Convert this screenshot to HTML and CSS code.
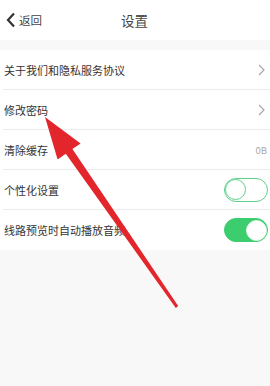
FILE: index.html
```html
<!DOCTYPE html>
<html lang="zh-CN">
<head>
<meta charset="utf-8">
<title>设置</title>
<link rel="stylesheet" href="styles.css">
</head>
<body>
  <div class="header">
    <div class="back">
      <svg width="10" height="16" viewBox="0 0 10 16"><path d="M8 1.5 L2 8 L8 14.5" fill="none" stroke="#333" stroke-width="2.2"/></svg>
      <span>返回</span>
    </div>
    <div class="title">设置</div>
    <div></div>
  </div>
  <div class="gap"></div>
  <div class="list">
    <div class="row">
      <span>关于我们和隐私服务协议</span>
      <svg class="chev" width="9" height="12" viewBox="0 0 9 12"><path d="M2 1 L7 6 L2 11" fill="none" stroke="#a5a5a5" stroke-width="1.1"/></svg>
    </div>
    <div class="row">
      <span>修改密码</span>
      <svg class="chev" width="9" height="12" viewBox="0 0 9 12"><path d="M2 1 L7 6 L2 11" fill="none" stroke="#a5a5a5" stroke-width="1.1"/></svg>
    </div>
    <div class="row">
      <span>清除缓存</span>
      <span class="size">0B</span>
    </div>
    <div class="row">
      <span>个性化设置</span>
      <div class="toggle"><div class="knob"></div></div>
    </div>
    <div class="row last">
      <span>线路预览时自动播放音频</span>
      <div class="toggle on"><div class="knob"></div></div>
    </div>
  </div>
  <svg class="arrow" width="270" height="386" viewBox="0 0 270 386">
    <polygon fill="#e3262b" points="45,117 80.6,143.4 72.4,149.1 178.2,306.1 175.8,307.9 65.8,153.7 57.6,159.4"/>
  </svg>
</body>
</html>
```

FILE: styles.css
```css
body {
  margin: 0;
  width: 270px;
  height: 386px;
  background-color: #f8f8f8;
  font-family: "Noto Sans CJK SC", sans-serif;
  color: #333;
  position: relative;
  overflow: hidden;
}
.header {
  height: 40px;
  background-color: white;
  display: grid;
  grid-template-columns: 1fr auto 1fr;
  align-items: center;
}
.back {
  display: flex;
  align-items: center;
  padding-left: 6px;
  font-size: 11.5px;
  color: #444;
  gap: 3px;
}
.title {
  font-size: 13.5px;
  color: #444;
  padding-right: 1px;
}
.gap {
  height: 10px;
}
.list {
  background-color: white;
  padding-left: 3px;
}
.row {
  height: 40px;
  box-sizing: border-box;
  border-bottom: 1px solid #ececec;
  display: flex;
  align-items: center;
  justify-content: space-between;
  padding-left: 1px;
  padding-right: 3px;
  font-size: 11px;
}
.row.last {
  border-bottom: none;
}
.chev {
  margin-right: 1px;
}
.size {
  font-size: 9.5px;
  color: #aaa;
}
.toggle {
  width: 44px;
  height: 24px;
  box-sizing: border-box;
  border: 1.5px solid #5fd08a;
  border-radius: 12px;
  background-color: white;
  display: flex;
  align-items: center;
  margin-right: -1px;
}
.knob {
  width: 21px;
  height: 21px;
  box-sizing: border-box;
  border-radius: 50%;
  border: 1.5px solid #5fd08a;
  background-color: white;
}
.toggle.on {
  background-color: #3ccd6e;
  border-color: #3ccd6e;
  justify-content: flex-end;
}
.toggle.on .knob {
  border-color: #e4f7ea;
}
.arrow {
  position: absolute;
  top: 0;
  left: 0;
  pointer-events: none;
}
```
